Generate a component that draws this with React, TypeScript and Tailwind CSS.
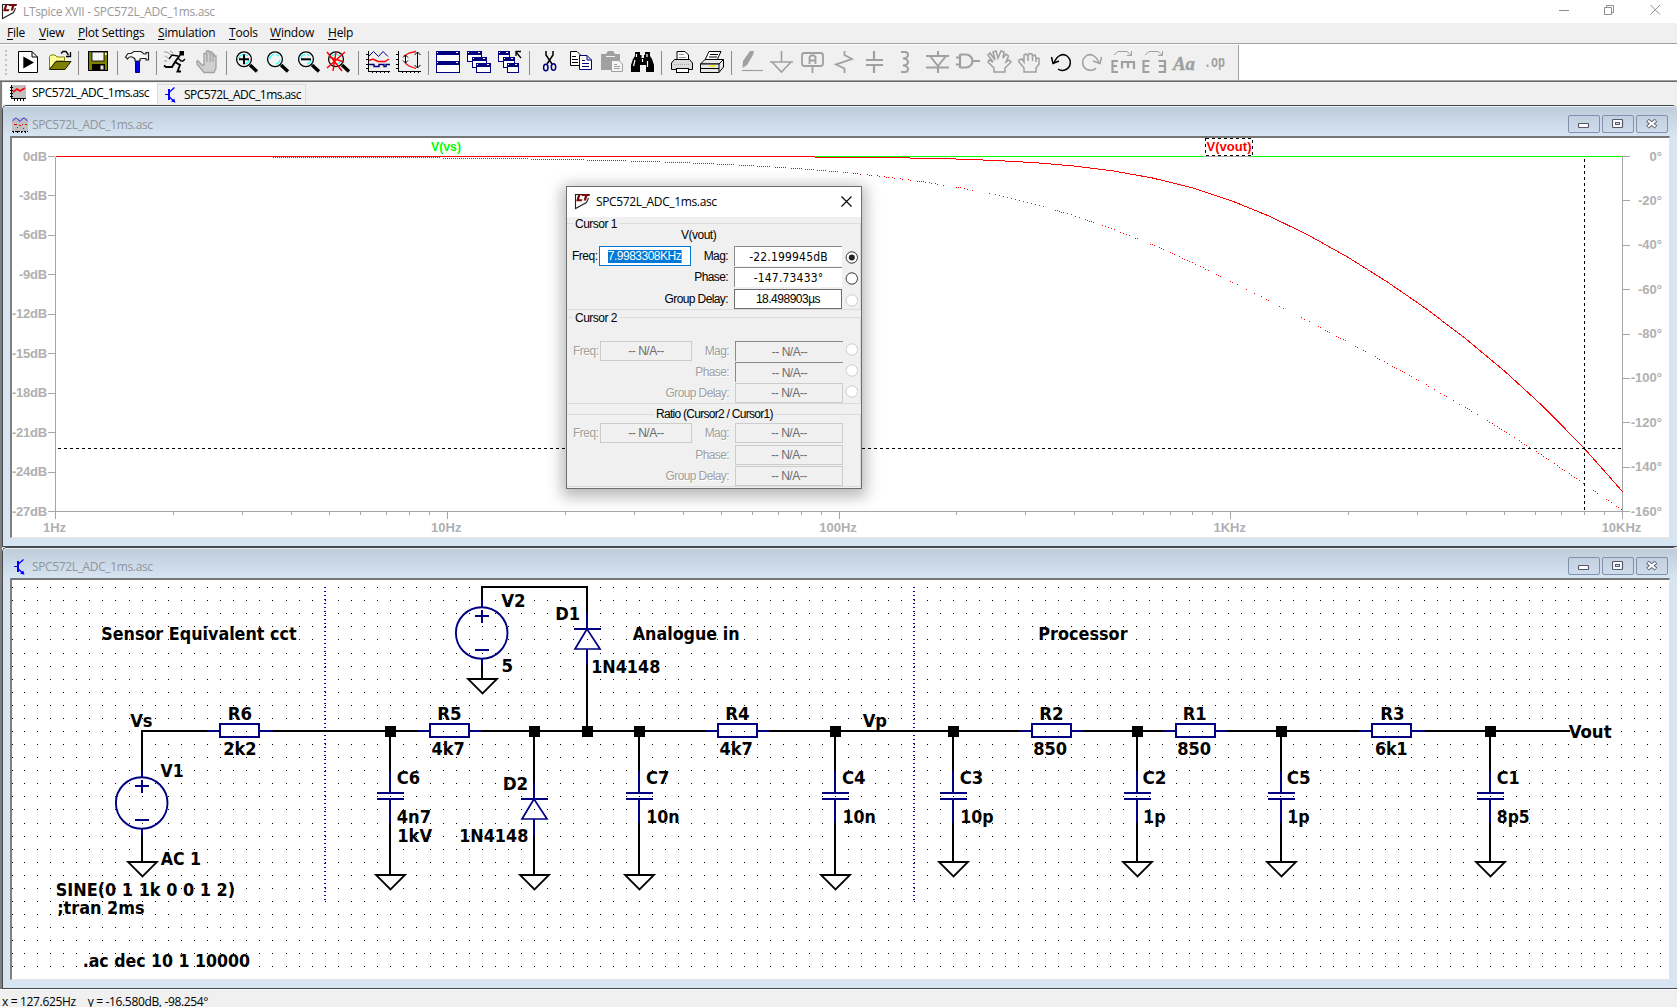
import React from "react";

const UI = "font-['Open_Sans','Noto_Sans',sans-serif]";
const DLG = "font-['Liberation_Sans',Arial,sans-serif]";
const FILE = "SPC572L_ADC_1ms.asc";

/* ---------- small icons ---------- */

function LtLogo({ className = "" }: { className?: string }) {
  return (
    <svg width="17" height="17" viewBox="0 0 17 17" className={className}>
      <path d="M1.5 1.5 V15.5 L12.5 9.5 L14.5 5" fill="#fff" stroke="#222" strokeWidth="1.1" />
      <path d="M1 1.5 H8" stroke="#222" />
      <path d="M4 2 H6.4 L5 6.2 H8.4 L7.8 8.2 H2.2 Z" fill="#7a0a0a" />
      <path d="M8 1 H16 L15.5 3 H13.4 L12 7.4 H9.6 L10.9 3 H7.5 Z" fill="#7a0a0a" />
    </svg>
  );
}

function PlotIcon() {
  return (
    <svg width="16" height="16" viewBox="0 0 16 16" shapeRendering="crispEdges">
      <rect x="1" width="15" height="13" fill="#c0c0c0" />
      <path d="M1.5 0 V13.5 H16 M0 2.5 H3 M0 5.5 H3 M0 8.5 H3 M0 11.5 H3 M4.5 13 V16 M7.5 13 V16 M10.5 13 V16 M13.5 13 V16" stroke="#000" fill="none" />
      <path d="M3 7 L7 4 L10 6 L15 3" stroke="#f00" strokeWidth="1.6" fill="none" shapeRendering="auto" />
    </svg>
  );
}

function WaveIcon() {
  return (
    <svg width="16" height="16" viewBox="0 0 16 16">
      <rect y="1" width="16" height="13" fill="#c0c0c0" />
      <path d="M0.5 4 L3.5 1.2 H4.5 L8 4.5 L11 1.2 H12.5 L15.5 4" stroke="#2020ff" fill="none" />
      <g shapeRendering="crispEdges">
        <path d="M2 7.5 H5 M7 8.5 H9 M10 7.5 H11 M13 7.5 H15 M5 10.5 H6 M11 11.5 H12" stroke="#f00" />
        <path d="M0 14.5 H16 M1.5 14 V16 M5.5 14 V16 M9.5 14 V16 M13.5 14 V16" stroke="#000" strokeDasharray="2 1" />
      </g>
    </svg>
  );
}

function TransistorIcon() {
  return (
    <svg width="16" height="16" viewBox="0 0 16 16">
      <path d="M2 7.5 H6 M11.5 0.5 L6.5 5 M6.5 10 L11 14.5" stroke="#00f" strokeWidth="1.2" fill="none" />
      <path d="M6 2 V13" stroke="#00f" strokeWidth="2" />
      <path d="M12.5 15.8 L8 14.4 L11.2 11.6 Z" fill="#00f" />
    </svg>
  );
}

/* ---------- toolbar ---------- */

const G = "#a0a0a0";

const lens = (cx: number) => (
  <>
    <path d={`M${cx + 6} 15 L${cx + 13} 21.5`} stroke="#000" strokeWidth="3.4" />
    <circle cx={cx} cy="9.3" r="7.4" fill="#f4f4f4" stroke="#000" strokeWidth="1.3" />
    <path d={`M${cx - 5} 9 A5 5 0 0 1 ${cx - 1} 4.3 M${cx + 1} 4.3 L${cx + 4} 6 M${cx + 5} 10 A5 5 0 0 1 ${cx + 1} 14`} stroke="#3ff" strokeWidth="1.3" fill="none" />
  </>
);

const miniWin = (x: number, y: number, w = 15, h = 11) => (
  <>
    <rect x={x + 0.5} y={y + 0.5} width={w - 1} height={h - 1} fill="#fff" stroke="#000080" />
    <rect x={x} y={y} width={w} height="4" fill="#000080" />
    <path d={`M${x + w - 4} ${y + 1.5} h2 M${x + 1} ${y + 1.5} h1`} stroke="#fff" />
  </>
);

const icons: Record<string, React.ReactNode> = {
  play: (
    <>
      <path d="M3.5 1.5 H17 L22.5 7 V22.5 H3.5 Z M17 1.5 V7 H22.5" fill="#fff" stroke="#000" />
      <path d="M8.3 6.5 L19 12.5 L8.3 18.5 Z" fill="#000" />
    </>
  ),
  open: (
    <>
      <path d="M3.5 19 V6.5 L5 5 H9 L11 7 H18.5 V11 H10 Z" fill="#ffff9c" stroke="#808000" />
      <path d="M3.5 19.5 L10 11.5 H25 L19 19.5 Z" fill="#808000" stroke="#222200" />
      <path d="M15 3.5 L17 1.5 H20 L22.5 5 M24.5 2 V6.5 H20" stroke="#000" fill="none" strokeWidth="1.3" />
    </>
  ),
  save: (
    <>
      <rect x="3.5" y="1.5" width="19" height="19" fill="#808000" stroke="#000" />
      <rect x="7" y="2" width="12" height="9" fill="#f4f4f4" stroke="#000" strokeWidth="0.8" />
      <rect x="20" y="3" width="1.5" height="2" fill="#fff" />
      <rect x="7" y="14" width="13" height="7" fill="#000" />
      <rect x="15.5" y="15.5" width="3" height="4" fill="#e0e0e0" />
    </>
  ),
  hammer: (
    <>
      <path d="M1.5 7 L4 3.5 H7 L10 1.5 H17 L20 4 H22 V2.5 H24.5 V10 H22 V8.5 H18 L16 9 V11 H11 V9 C8 6 5 6 3.5 9 Z" fill="#f6f6f6" stroke="#222" strokeWidth="1.2" />
      <path d="M11.5 11.5 H15.5 V22.5 H11.5 Z" fill="#0000e8" stroke="#000080" />
    </>
  ),
  run: (
    <>
      <rect x="16.5" y="1" width="4.5" height="4.5" fill="#000" />
      <path d="M17 5 L12 12 L17 15 L14.5 21.5 H18 M12 12 L9 17 H3 L1 15.5" stroke="#000" strokeWidth="1.9" fill="none" />
      <path d="M15 6 L9 5 L6 9 M15 8 L18 11 H20 L22 9" stroke="#000" strokeWidth="1.4" fill="none" />
      <path d="M1 2 H4 L8 5 M2 6 L5 8 M7 1 L10 3 M1 11 H4" stroke="#999" fill="none" />
    </>
  ),
  hand: (
    <>
      <path d="M8 15 L4 11 H3 V14 L10 22.5 H20 L22 18 V6 H20 V4 H18 V2 H15 V1 H12.5 V3.5 H10 V15 Z" fill="#d0d0d0" stroke={G} strokeWidth="1.3" />
      <path d="M13 4 V12 M16.2 3 V12 M19 5 V12" stroke={G} strokeWidth="1.2" />
    </>
  ),
  zin: (
    <>
      {lens(11)}
      <path d="M6 9.3 H16 M11 4.3 V14.3" stroke="#000" strokeWidth="2" />
    </>
  ),
  zfull: lens(11),
  zout: (
    <>
      {lens(11)}
      <path d="M6 9.3 H16" stroke="#000" strokeWidth="2" />
    </>
  ),
  zx: (
    <>
      {lens(10)}
      <path d="M1 2 L16 21 M19 2 L1 18 M3 7 L18 12 M10 2 L7 21" stroke="#f00" strokeWidth="1.5" />
    </>
  ),
  waves: (
    <>
      <path d="M3.5 1 V21.5 H25 M1 4.5 H4 M1 9.5 H4 M1 14.5 H4 M1 18.5 H4 M7.5 21 V23 M11.5 21 V23 M15.5 21 V23 M19.5 21 V23 M23.5 21 V23" stroke="#000" fill="none" shapeRendering="crispEdges" />
      <path d="M4 6 L8.5 1.5 L13.5 6.5 L18 1.5 L23 6.5" stroke="#000080" fill="none" />
      <path d="M4 10.5 L8 9 L13 11.5 H20 L24 9" stroke="#f00" strokeWidth="1.4" fill="none" />
      <path d="M4 14.5 H9 V16.5 H14 V14.5 H19 V16.5 H21 V14.5 H25" stroke="#000080" fill="none" strokeWidth="1.4" />
    </>
  ),
  vert: (
    <>
      <path d="M2.5 1 V21.5 H25 M0 4.5 H3 M0 9.5 H3 M0 14.5 H3 M0 18.5 H3 M6.5 21 V23 M10.5 21 V23 M14.5 21 V23 M18.5 21 V23 M22.5 21 V23" stroke="#000" fill="none" shapeRendering="crispEdges" />
      <path d="M8 6 L13 3 L20 1.5 M9 13 L13 16 L20 18.5" stroke="#f00" strokeWidth="1.3" fill="none" />
      <path d="M9.5 5 V13 M7 7.5 L9.5 5 L12 7.5 M7 10.5 L9.5 13 L12 10.5 M21.5 2 V18 M18.5 5 L21.5 2 L24.5 5 M18.5 15 L21.5 18 L24.5 15" stroke="#000" fill="none" />
    </>
  ),
  tile: (
    <g shapeRendering="crispEdges">
      {miniWin(1, 1, 24, 11)}
      {miniWin(1, 11, 24, 12)}
    </g>
  ),
  cascade: (
    <g shapeRendering="crispEdges">
      {miniWin(1, 1)}
      {miniWin(6, 7)}
      {miniWin(10, 13, 15, 10)}
    </g>
  ),
  closeall: (
    <g shapeRendering="crispEdges">
      {miniWin(1, 1, 12)}
      {miniWin(6, 7, 12)}
      {miniWin(10, 13, 12, 10)}
      <path d="M19 6 V1.5 H24 M19 2 L24 8" stroke="#000" fill="none" strokeWidth="1.3" shapeRendering="auto" />
    </g>
  ),
  cut: (
    <>
      <path d="M10 1 V5 L16 14 M17 1 V5 L11 14" stroke="#000" strokeWidth="1.5" fill="none" />
      <ellipse cx="9.8" cy="17.5" rx="2.2" ry="3.3" fill="none" stroke="#000080" strokeWidth="1.5" />
      <ellipse cx="17.5" cy="17" rx="2.2" ry="3.3" fill="none" stroke="#000080" strokeWidth="1.5" />
    </>
  ),
  copy: (
    <>
      <path d="M3.5 1.5 H10 L14.5 6 V15.5 H3.5 Z" fill="#fff" stroke="#000" />
      <path d="M5 6.5 H9 M5 9.5 H11 M5 12.5 H11" stroke="#000" />
      <path d="M12.5 5.5 H20 L24.5 10 V19.5 H12.5 Z M20 5.5 V10 H24.5" fill="#fff" stroke="#000080" />
      <path d="M15 10.5 H18 M15 13.5 H22 M15 16.5 H22" stroke="#000080" />
    </>
  ),
  paste: (
    <>
      <path d="M3 4 H8 L10 1 H15 L17 4 H22 V20 H3 Z" fill={G} />
      <path d="M8 6.5 H17" stroke="#f0f0f0" />
      <path d="M13.5 10.5 H21 L24.5 14 V21.5 H13.5 Z" fill="#f4f4f4" stroke={G} />
      <path d="M16 14.5 H19 M16 16.5 H22 M16 18.5 H22" stroke={G} />
    </>
  ),
  find: (
    <>
      <path d="M6 2 H11 V5 H12.5 V8 H15 V5 H16 V2 H21 V6 L23 9 L25 15 V22 H17 V15 H11 V22 H2 V15 L4 9 L6 6 Z" fill="#000" />
      <path d="M7.5 4 V7 M18 4 V7 M6 10 L4.5 16 M18.5 11 V17 M13.5 9 V12" stroke="#fff" strokeWidth="1.2" />
    </>
  ),
  print: (
    <>
      <path d="M9 10 V1.5 H17 L20.5 5 V10" fill="#fff" stroke="#000" />
      <path d="M11 4.5 H16 M11 7.5 H18" stroke="#999" />
      <path d="M3.5 13 L6.5 9.5 H21.5 L24.5 13 V19.5 H3.5 Z" fill="#dcdcdc" stroke="#000" />
      <rect x="8.5" y="18.5" width="12" height="4" fill="#fff" stroke="#000" />
      <path d="M6 14.5 H22" stroke="#aaa" strokeDasharray="1 1" />
    </>
  ),
  print2: (
    <>
      <path d="M6 10 L10 1.5 H22 L18 10" fill="#fff" stroke="#000" />
      <path d="M11 4.5 H19 M10 7 H18" stroke="#000" />
      <path d="M1.5 14 L6 9.5 H24.5 L20 14 Z" fill="#e8e8e8" stroke="#000" />
      <path d="M1.5 14 H20 V22.5 H1.5 Z M20 14 L24.5 9.5 V17 L20 22.5 M1.5 18.5 H20" fill="#e8e8e8" stroke="#000" />
      <path d="M11 16 H16" stroke="#f2e600" strokeWidth="1.6" />
    </>
  ),
  pencil: (
    <>
      <path d="M12 1 H16 L15 5 L9 15 L4.5 18 L5 11 Z" fill={G} />
      <path d="M4 20.5 H25" stroke={G} strokeWidth="1.2" />
    </>
  ),
  gnd: <path d="M12.5 1 V12 M1 12 H24 M3 12 L12.5 22 L22 12" stroke={G} strokeWidth="1.6" fill="none" />,
  label: (
    <>
      <rect x="2" y="3" width="21" height="13" rx="2.5" fill="none" stroke={G} strokeWidth="1.8" />
      <path d="M12.5 16 V23 M9.5 14 V7 L11 5.5 H14 L15.5 7 V14 M9.5 10.5 H15.5" stroke={G} strokeWidth="1.8" fill="none" />
    </>
  ),
  res: <path d="M13.5 1 V5 L21 9 L5 14.5 L13.5 18.5 V23" stroke={G} strokeWidth="1.8" fill="none" />,
  cap: <path d="M12 1 V9 M4 10 H21 M4 15 H21 M12 16 V23" stroke={G} strokeWidth="2.2" fill="none" />,
  ind: <path d="M8 2 H12 Q15 2 15 5 Q15 8 10 8.5 Q15 9 15 12 Q15 15 10 15.5 Q15 16 15 19 Q15 22 12 22 H8" stroke={G} strokeWidth="2" fill="none" />,
  diode: <path d="M14 1 V6 M2 6 H25 M6 6 L14 16 L22 6 M2 17.5 H25 M14 17 V23" stroke={G} strokeWidth="2" fill="none" />,
  gate: <path d="M5 4 V18 M5 4.5 H11 A6.5 6.5 0 0 1 11 17.5 H5 M1 7.5 H5 M1 14.5 H5 M18 11 H25" stroke={G} strokeWidth="2.2" fill="none" />,
  move: <path d="M8 22 L8 18 L2 12 L3 10 L7 12 L2 5 L4 3 L9 10 L7 2 L10 1 L12 8 L15 1 L18 2 L17 8 L20 4 L22.5 6 L20 12 L23 10 L25 12 L19 18 V22 Z" fill="none" stroke={G} strokeWidth="1.5" />,
  drag: <path d="M7 22 V18 L2 12 V10 L5 9 L7 12 V5 L9 4 L11 6 L12 3.5 L15 4 L15.5 6 L18 5 L19 8 L22 8.5 V14 L19 18 V22 Z M11 6 V11 M15.5 6 V11 M19 8 V12" fill="none" stroke={G} strokeWidth="1.5" />,
  undo: <path d="M6 13 C9 5 15 3 19 6 C24 10 23 17 18 19.5 C15 21 12 20.5 10 19 M3.5 7 L5 13.5 L11 11" stroke="#000" strokeWidth="1.5" fill="none" />,
  redo: <path d="M20 13 C17 5 11 3 7 6 C2 10 3 17 8 19.5 C11 21 15 20.5 17 18 M22.5 7 L21 13.5 L14 11" stroke={G} strokeWidth="1.5" fill="none" />,
  rot: (
    <>
      <path d="M4 5 L8 1.5 H17 L21 5 M21.5 1 V5.5 H17" stroke={G} fill="none" />
      <path d="M8 11 H2.5 V22 H8 M2.5 16 H7 M12 18.5 V12 H25 M18 12 V18 M24 12 V19" stroke={G} strokeWidth="2.2" fill="none" />
    </>
  ),
  mirror: (
    <>
      <path d="M4 5 L8 1.5 H17 L21 5 M21.5 1 V5.5 H17" stroke={G} fill="none" />
      <path d="M8.5 11 H2.5 V22 H8.5 M2.5 16 H8 M17.5 11 H24 V22 H17.5 M24 16 H18" stroke={G} strokeWidth="2.2" fill="none" />
    </>
  ),
  text: (
    <text x="1" y="19.5" fontSize="19" fontWeight="bold" fontStyle="italic" fill={G} stroke={G} strokeWidth="0.4" textLength="22" lengthAdjust="spacingAndGlyphs" fontFamily="Liberation Serif, serif">
      Aa
    </text>
  ),
  op: (
    <text x="1" y="17" fontSize="17" fontWeight="bold" fill={G} textLength="21" lengthAdjust="spacingAndGlyphs" fontFamily="Liberation Mono, monospace">
      .op
    </text>
  ),
};

const toolbar =
  "play open | save | hammer | run hand | zin zfull zout zx | waves vert | tile cascade closeall | cut copy paste find | print print2 | pencil gnd label res cap ind diode gate move drag undo redo rot mirror text op".split(" ");

function Toolbar() {
  return (
    <div className="flex h-[35px] bg-white">
      <div className="flex w-[1239px] items-center border-r border-[#a0a0a0] bg-[#f0f0f0]">
        <div className="ml-[5px] mr-[5px] flex h-[26px] w-[2px] flex-col justify-between">
          {[0, 1, 2, 3, 4, 5].map((i) => (
            <i key={i} className="h-[2px] w-[2px] bg-[#c0c0c0]" />
          ))}
        </div>
        {toolbar.map((n, i) =>
          n === "|" ? (
            <div key={i} className="flex w-2 justify-center">
              <div className="h-6 w-px bg-[#8c8c8c]" />
            </div>
          ) : (
            <div key={i} className="flex w-[31px] shrink-0 justify-center">
              <svg width="25" height="25" viewBox="0 0 25 25" className="overflow-visible">
                {icons[n]}
              </svg>
            </div>
          )
        )}
      </div>
    </div>
  );
}

/* ---------- child windows ---------- */

function WinButtons() {
  const box = "flex h-[18px] w-8 items-center justify-center rounded-[2px] border border-[#8190ae] bg-gradient-to-b from-[#c3d0df] to-[#cddbea]";
  return (
    <div className="mr-[9px] flex gap-[2px]">
      <div className={box}>
        <svg width="12" height="12" viewBox="0 0 12 12">
          <rect x="0.5" y="5.5" width="10" height="4" rx="0.8" fill="#fff" stroke="#55576a" strokeWidth="1.2" />
        </svg>
      </div>
      <div className={box}>
        <svg width="12" height="12" viewBox="0 0 12 12">
          <rect x="0.5" y="1.5" width="10" height="8" rx="0.8" fill="#fff" stroke="#55576a" strokeWidth="1.2" />
          <rect x="3.5" y="4.5" width="4" height="2" fill="#cfdcea" stroke="#55576a" />
        </svg>
      </div>
      <div className={box}>
        <svg width="12" height="12" viewBox="0 0 12 12">
          <path d="M1.5 2.2 L10 9 M10 2.2 L1.5 9" stroke="#55576a" strokeWidth="4" />
          <path d="M2 2.6 L9.5 8.6 M9.5 2.6 L2 8.6" stroke="#fff" strokeWidth="2" />
        </svg>
      </div>
    </div>
  );
}

function ChildWindow({ icon, className, children }: { icon: React.ReactNode; className: string; children: React.ReactNode }) {
  return (
    <section className={`flex flex-col rounded-t-[5px] border-l border-t border-[#45484c] bg-[#d7e4f2] ${className}`}>
      <header className="flex h-[30px] shrink-0 items-center rounded-t-[4px] border-t border-[#e4ecf4] bg-gradient-to-b from-[#bfccda] to-[#d7e4f2]">
        <span className="ml-[9px] mt-[6px]">{icon}</span>
        <span className={`${UI} ml-[4px] mt-[6px] flex-1 text-[12px] leading-4 tracking-[-0.36px] text-[#8f959d]`}>{FILE}</span>
        <div className="mt-[5px]">
          <WinButtons />
        </div>
      </header>
      <div className="ml-[7px] mr-[7px] border-b border-l-2 border-r border-t-2 border-b-[#e3e3e3] border-l-[#808080] border-r-[#e3e3e3] border-t-[#757575] bg-white">
        {children}
      </div>
    </section>
  );
}

/* ---------- bode plot ---------- */

type C = [number, number];
const mul = (a: C, b: C): C => [a[0] * b[0] - a[1] * b[1], a[0] * b[1] + a[1] * b[0]];

/* RC ladder from source to output: [series ohms, shunt farads] */
const ladder: C[] = [
  [2200, 4.7e-9],
  [4700, 10e-9],
  [4700, 10.01e-9],
  [850, 1e-12],
  [850, 1e-12],
  [6100, 8.5e-12],
];

function response(f: number) {
  let v: C = [1, 0];
  let i: C = [0, 0];
  for (const [r, c] of [...ladder].reverse()) {
    const y = mul(v, [0, 2 * Math.PI * f * c]);
    i = [i[0] + y[0], i[1] + y[1]];
    v = [v[0] + i[0] * r, v[1] + i[1] * r];
  }
  let ph = Math.atan2(v[1], v[0]);
  if (ph < 0) ph += 2 * Math.PI;
  return { db: -20 * Math.log10(Math.hypot(v[0], v[1])), deg: (-ph * 180) / Math.PI };
}

const X0 = 55.5;
const X1 = 1622.5;
const Y0 = 156.5;
const H = 355;
const samples = Array.from({ length: 41 }, (_, k) => {
  const r = response(Math.pow(10, k / 10));
  return { x: X0 + ((X1 - X0) * k) / 40, m: Y0 - (r.db * H) / 27, p: Y0 - (r.deg * H) / 160 };
});
const magPath = "M" + samples.map((s) => `${s.x.toFixed(2)} ${s.m.toFixed(2)}`).join(" L");

function phaseAt(x: number) {
  const t = ((x - X0) / (X1 - X0)) * 40;
  const k = Math.min(39, Math.max(0, Math.floor(t)));
  return samples[k].p + (samples[k + 1].p - samples[k].p) * (t - k);
}

/* visible runs of the sparse phase trace: [start, end, pitch] */
const runs: number[][] = [
  [860, 862, 2], [867, 872, 2], [877, 881, 2], [884, 889, 2], [892, 896, 2], [900, 903, 2], [908, 911, 2],
  [917, 926, 2], [929, 932, 2], [935, 938, 2], [943, 944, 2], [956, 962, 2], [964, 969, 3], [972, 973, 2],
  [989, 990, 2], [995, 997, 2], [999, 1000, 2], [1003, 1044, 4], [1055, 1062, 2], [1063, 1082, 4],
  [1085, 1094, 2], [1102, 1117, 3], [1120, 1130, 3], [1135, 1139, 2], [1150, 1155, 2], [1159, 1164, 2],
  [1170, 1175, 2], [1179, 1195, 2.6], [1200, 1210, 2.6], [1216, 1222, 2], [1230, 1234, 2], [1237, 1238, 2],
  [1246, 1247, 2], [1254, 1255, 2], [1261, 1262, 2], [1266, 1270, 2],
  [1279, 1280, 2], [1283, 1284, 2], [1301, 1304, 2.5], [1309, 1310, 3], [1318, 1321, 2], [1325, 1330, 2],
  [1336, 1342, 2], [1343, 1347, 2], [1355, 1358, 2], [1363, 1366, 2], [1375, 1380, 2], [1384, 1388, 3],
  [1392, 1397, 2], [1400, 1405, 2], [1409, 1412, 2], [1416, 1420, 2], [1426, 1429, 2], [1434, 1436, 2],
  [1440, 1441, 2], [1444, 1448, 2], [1453, 1455, 3], [1459, 1460, 2], [1465, 1472, 2], [1477, 1478, 2],
  [1487, 1510, 2.4], [1514, 1515, 2], [1519, 1530, 2.4], [1536, 1550, 2.4], [1554, 1565, 2.6],
  [1569, 1580, 2.4], [1583, 1584, 2], [1593, 1599, 2], [1606, 1612, 2.4], [1616, 1622, 2.4],
];

const dots: string[] = [];
for (let x = 273; x < 860; x += 2) {
  const y = Math.floor(phaseAt(x));
  if (y > 156 && y === Math.floor(phaseAt(x - 3))) dots.push(`M${x} ${y + 0.5}h1`);
}
runs.forEach(([a, b, p]) => {
  for (let x = a; x < b; x += p) dots.push(`M${Math.round(x)} ${Math.floor(phaseAt(x)) + 0.5}h1`);
});

const freqTicks: { x: number; major: boolean }[] = [];
for (let d = 0; d < 4; d++)
  for (let n = 1; n < 10; n++)
    freqTicks.push({ x: Math.floor(X0 + ((X1 - X0) / 4) * (d + Math.log10(n))) + 0.5, major: n === 1 });
freqTicks.push({ x: X1, major: true });

function Plot() {
  return (
    <svg width="1656" height="399" viewBox="12 138 1656 399" className="block" fontFamily="Liberation Sans, Arial, sans-serif" fontWeight="bold" fontSize="13">
      <g stroke="#a6a6a6" shapeRendering="crispEdges" fill="none">
        <path d={`M${X0} ${Y0} V519 M${X1} ${Y0} V519 M${X0} ${Y0} H${X1} M${X0} 511.5 H${X1}`} />
        {freqTicks.map((t, i) => (
          <path key={i} d={`M${t.x} 511.5 V${t.major ? 519 : 515}`} />
        ))}
        {Array.from({ length: 10 }, (_, i) => (
          <path key={i} d={`M48 ${Math.floor(Y0 + (i * H) / 9) + 0.5} H55`} />
        ))}
        {Array.from({ length: 9 }, (_, i) => (
          <path key={i} d={`M1623 ${Math.floor(Y0 + (i * H) / 8) + 0.5} H1630`} />
        ))}
      </g>
      <g fill="#b0b0b0">
        {Array.from({ length: 10 }, (_, i) => (
          <text key={i} x="47" y={160.6 + Math.floor((i * H) / 9)} textAnchor="end" letterSpacing="-0.2">
            {i ? `-${i * 3}dB` : "0dB"}
          </text>
        ))}
        {Array.from({ length: 9 }, (_, i) => (
          <text key={i} x="1662" y={160.6 + Math.floor((i * H) / 8)} textAnchor="end">
            {i ? `-${i * 20}°` : "0°"}
          </text>
        ))}
        {["1Hz", "10Hz", "100Hz", "1KHz", "10KHz"].map((t, i) => (
          <text key={t} x={54.5 + i * 391.75} y="532" textAnchor="middle">
            {t}
          </text>
        ))}
      </g>
      <g shapeRendering="crispEdges" fill="none">
        <path d={`M56 ${Y0} H1204 M1252 ${Y0} H1622`} stroke="#00ff00" />
        <path d={magPath} stroke="#ff0000" />
        <path d={dots.join("")} stroke="#ff0000" />
        <path d="M58 448.5 H1622" stroke="#000" strokeDasharray="3 3" />
        <path d="M1584.5 159 V511" stroke="#000" strokeDasharray="3 3" />
        <rect x="1205.5" y="138.5" width="47" height="17" stroke="#000" strokeDasharray="3 3" />
      </g>
      <text x="431" y="151" fill="#00ff00" textLength="30" lengthAdjust="spacingAndGlyphs">V(vs)</text>
      <text x="1206.5" y="151" fill="#ff0000" textLength="45" lengthAdjust="spacingAndGlyphs">V(vout)</text>
    </svg>
  );
}

/* ---------- schematic ---------- */

const NAVY = "#000080";
const gx = (c: number) => Math.floor(24.34 + 13.0905 * c);
const gy = (r: number) => Math.round(587 + 13.08 * r);

function Wire({ c1, r1, c2, r2 }: { c1: number; r1: number; c2: number; r2: number }) {
  return <path d={`M${gx(c1)} ${gy(r1)} L${gx(c2)} ${gy(r2)}`} stroke="#000" strokeWidth="2" strokeLinecap="square" shapeRendering="crispEdges" />;
}
function Ground({ c, r }: { c: number; r: number }) {
  const x = gx(c);
  const y = gy(r);
  return <path d={`M${x - 14} ${y} H${x + 15} L${x + 0.5} ${y + 14.5} Z`} fill="#fff" stroke="#000" strokeWidth="1.8" />;
}
function Resistor({ c }: { c: number }) {
  const a = gx(c);
  const b = gx(c + 5);
  return (
    <g stroke={NAVY} strokeWidth="2" fill="none" shapeRendering="crispEdges">
      <path d={`M${a} 731 H${a + 13} M${a + 52} 731 H${b}`} />
      <rect x={a + 13} y="724" width="39" height="13" />
    </g>
  );
}
function Capacitor({ c, g }: { c: number; g: number }) {
  const x = gx(c);
  return (
    <g fill="none">
      <Wire c1={c} r1={11} c2={c} r2={14} />
      <Wire c1={c} r1={18} c2={c} r2={g} />
      <path d={`M${x} 771 V793 M${x} 799 V823 M${x - 13} 793 H${x + 14} M${x - 13} 799 H${x + 14}`} stroke={NAVY} strokeWidth="2" shapeRendering="crispEdges" />
      <Ground c={c} r={g} />
    </g>
  );
}
function Diode({ c, r }: { c: number; r: number }) {
  const x = gx(c);
  const y = gy(r);
  return (
    <g fill="none" stroke={NAVY} strokeWidth="2">
      <path d={`M${x} ${y} V${y + 16} M${x - 13} ${y + 16} H${x + 14} M${x} ${y + 36} V${gy(r + 4)}`} shapeRendering="crispEdges" />
      <path d={`M${x} ${y + 16} L${x - 12} ${y + 36} H${x + 13} Z`} strokeWidth="1.7" />
    </g>
  );
}
function Source({ c, r }: { c: number; r: number }) {
  const x = gx(c);
  const y = gy(r + 2.5);
  return (
    <g fill="none" stroke={NAVY} strokeWidth="1.9">
      <circle cx={x - 0.3} cy={y} r="25.8" />
      <path d={`M${x} ${gy(r)} V${y - 25} M${x} ${y + 25} V${gy(r + 5)} M${x - 7} ${y - 17} h14 M${x} ${y - 23} v13 M${x - 7} ${y + 17} h14`} strokeWidth="2" shapeRendering="crispEdges" />
    </g>
  );
}

/* [text, left, right, baseline] */
const labels: [string, number, number, number][] = [
  ["Sensor Equivalent cct", 102, 296, 640],
  ["Analogue in", 633.5, 739, 640],
  ["Processor", 1039, 1127, 640],
  ["Vs", 131, 152, 727], ["Vp", 863.5, 886.5, 727], ["Vout", 1569.5, 1611, 738],
  ["R6", 228.5, 251.5, 720], ["2k2", 224, 256, 755],
  ["R5", 438, 461, 720], ["4k7", 432.3, 464, 755],
  ["R4", 726, 749, 720], ["4k7", 720.3, 752.3, 755],
  ["R2", 1040, 1063, 720], ["850", 1034, 1066.5, 755],
  ["R1", 1183.5, 1206, 720], ["850", 1178, 1210.5, 755],
  ["R3", 1381, 1404, 720], ["6k1", 1375.7, 1407, 755],
  ["V1", 161.3, 183, 777], ["AC 1", 161.5, 200.5, 865],
  ["V2", 502, 525, 607], ["5", 502.3, 512.5, 672],
  ["D1", 556, 579.5, 620], ["1N4148", 592, 659.7, 673],
  ["D2", 503.5, 527.7, 790], ["1N4148", 460, 527.7, 842],
  ["C6", 397.5, 419.5, 784], ["4n7", 397.5, 430.5, 823], ["1kV", 398, 431.5, 842],
  ["C7", 646.7, 668.7, 784], ["10n", 647, 679, 823],
  ["C4", 842.7, 865, 784], ["10n", 843.3, 875.3, 823],
  ["C3", 960.5, 982.8, 784], ["10p", 961, 993, 823],
  ["C2", 1143.3, 1166, 784], ["1p", 1143.8, 1165, 823],
  ["C5", 1287.5, 1310, 784], ["1p", 1288, 1309, 823],
  ["C1", 1497.5, 1519, 784], ["8p5", 1497.6, 1529, 823],
  ["SINE(0 1 1k 0 0 1 2)", 56.5, 234.5, 896],
  [";tran 2ms", 58, 144, 914],
  [".ac dec 10 1 10000", 83.5, 249.5, 967],
];

const gridDots: string[] = [];
for (let r = 0; r < 30; r++)
  for (let c = -1; c <= 125; c++) gridDots.push(`M${Math.max(12, Math.floor(24.3 + 13.088 * c))} ${Math.round(587.1 + 13.08 * r) + 0.5}h1`);

const rail: [number, number][] = [[9, 14], [19, 30], [35, 52], [57, 76], [81, 87], [92, 102], [107, 118]];

function Schematic() {
  return (
    <svg width="1656" height="399" viewBox="12 580 1656 399" className="block">
      <path d={gridDots.join("")} stroke="#000" shapeRendering="crispEdges" />
      <path d="M325 587 V902 M914 587 V902" stroke="#0000b4" strokeWidth="2" strokeDasharray="1 3" shapeRendering="crispEdges" />
      {rail.map(([a, b]) => (
        <Wire key={a} c1={a} r1={11} c2={b} r2={11} />
      ))}
      <Wire c1={9} r1={11} c2={9} r2={14} />
      <Wire c1={9} r1={19} c2={9} r2={21} />
      <Source c={9} r={14} />
      <Ground c={9} r={21} />
      <Wire c1={35} r1={0} c2={43} r2={0} />
      <Wire c1={35} r1={0} c2={35} r2={1} />
      <Wire c1={43} r1={0} c2={43} r2={2} />
      <Wire c1={35} r1={6} c2={35} r2={7} />
      <Source c={35} r={1} />
      <Ground c={35} r={7} />
      <Wire c1={43} r1={6} c2={43} r2={11} />
      <Diode c={43} r={2} />
      <Wire c1={39} r1={11} c2={39} r2={15} />
      <Wire c1={39} r1={19} c2={39} r2={22} />
      <Diode c={39} r={15} />
      <Ground c={39} r={22} />
      {[14, 30, 52, 76, 87, 102].map((c) => (
        <Resistor key={c} c={c} />
      ))}
      {[28, 47, 62].map((c) => (
        <Capacitor key={c} c={c} g={22} />
      ))}
      {[71, 85, 96, 112].map((c) => (
        <Capacitor key={c} c={c} g={21} />
      ))}
      {[28, 39, 43, 47, 62, 71, 85, 96, 112].map((c) => (
        <rect key={c} x={gx(c) - 5} y="726" width="11" height="11" fill="#000" />
      ))}
      <g fontFamily="DejaVu Sans Condensed, DejaVu Sans, sans-serif" fontWeight="bold" fontSize="17" fill="#000">
        {labels.map(([t, a, b, y], i) => (
          <text key={i} x={a - 0.8} y={y - 0.3} textLength={b - a + 1.4} lengthAdjust="spacingAndGlyphs">
            {t}
          </text>
        ))}
      </g>
    </svg>
  );
}

/* ---------- cursor dialog ---------- */

type RowProps = { label: string; value: string; freq?: string; live?: boolean; radio?: "on" | "off" | "dim"; style?: "sunken" | "box"; big?: boolean };

function Row({ label, value, freq, live, radio, style = "box", big }: RowProps) {
  const lab = live ? "text-black" : "text-[#a0a0a0] [text-shadow:1px_1px_0_#fff]";
  const box =
    style === "sunken"
      ? "border-l border-t border-[#8a8a8a]"
      : live
      ? "border border-[#6e6e6e]"
      : "border border-[#cccccc]";
  return (
    <div className={`flex h-5 shrink-0 items-center ${live ? "" : "pl-px"}`}>
      <span className={`w-8 pl-[5px] ${lab}`}>{freq ? "Freq:" : ""}</span>
      {freq ? (
        live ? (
          <div className="flex h-5 w-[92px] items-center justify-center border border-[#0078d7] bg-white">
            <span className="border-r border-[#ff8728] bg-[#0078d7] leading-[13px] text-white">{freq}</span>
          </div>
        ) : (
          <div className="flex h-5 w-[92px] items-center justify-center border border-[#cccccc] text-[#6d6d6d]">{freq}</div>
        )
      ) : (
        <div className="w-[92px]" />
      )}
      <span className={`mr-[6px] flex w-[37px] justify-end whitespace-nowrap tracking-[-0.6px] ${lab}`}>{label}</span>
      <div
        className={`flex h-5 w-[108px] items-center justify-center ${box} ${live ? "bg-white text-black" : "text-[#6d6d6d]"} ${
          big ? "font-['DejaVu_Sans_Condensed','DejaVu_Sans',sans-serif] text-[12px] tracking-[0.18px]" : ""
        }`}
      >
        {value}
      </div>
      {radio && (
        <svg width="13" height="13" viewBox="0 0 13 13" className={live ? "ml-[3px] mt-[2px]" : "-mt-[4px] ml-[2px]"}>
          <circle cx="6.8" cy="6.5" r="5.7" fill="#fff" stroke={radio === "dim" ? "#cccccc" : "#333"} />
          {radio === "on" && <circle cx="6.8" cy="6.5" r="3" fill="#222" />}
        </svg>
      )}
    </div>
  );
}

function Group({ title, center, className, children }: { title: string; center?: boolean; className: string; children: React.ReactNode }) {
  return (
    <div className={`relative border-y border-r border-[#dcdcdc] ${className}`}>
      <span className={`absolute whitespace-nowrap bg-[#f0f0f0] px-[2px] leading-[14px] text-black ${center ? "-top-[8px] left-[87px] tracking-[-0.72px]" : "-top-[7px] left-[6px]"}`}>{title}</span>
      {children}
    </div>
  );
}

function CursorDialog() {
  return (
    <div className={`absolute left-[566px] top-[186px] h-[303px] w-[296px] border border-[#6e6e6e] bg-[#f0f0f0] shadow-[0_4px_14px_4px_rgba(0,0,0,0.28)] ${DLG} text-[12px] leading-[14px] tracking-[-0.5px]`}>
      <div className="flex h-[30px] items-center bg-white">
        <LtLogo className="mb-[2px] ml-[7px] mr-[5px]" />
        <span className={`${UI} flex-1 text-[12px] tracking-[-0.36px] text-black`}>{FILE}</span>
        <svg width="11" height="11" viewBox="0 0 11 11" className="mb-[2px] mr-[9px]">
          <path d="M0.5 0.5 L10.5 10.5 M10.5 0.5 L0.5 10.5" stroke="#000" strokeWidth="1.1" />
        </svg>
      </div>
      <Group title="Cursor 1" className="mt-[6px] h-[87px]">
        <div className="flex h-[22px] items-center pl-[114px] text-black">V(vout)</div>
        <Row live label="Mag:" freq="7.9983308KHz" value="-22.199945dB" radio="on" style="sunken" big />
        <div className="h-px" />
        <Row live label="Phase:" value="-147.73433°" radio="off" style="sunken" big />
        <div className="h-[2px]" />
        <Row live label="Group Delay:" value="18.498903µs" radio="dim" />
      </Group>
      <Group title="Cursor 2" className="mt-[7px] flex h-[87px] flex-col gap-px pt-[23px]">
        <Row label="Mag:" freq="-- N/A--" value="-- N/A--" radio="dim" style="sunken" />
        <Row label="Phase:" value="-- N/A--" radio="dim" style="sunken" />
        <Row label="Group Delay:" value="-- N/A--" radio="dim" />
      </Group>
      <Group title="Ratio (Cursor2 / Cursor1)" center className="mt-[10px] flex h-[73px] flex-col pt-[8px]">
        <Row label="Mag:" freq="-- N/A--" value="-- N/A--" />
        <div className="h-[2px]" />
        <Row label="Phase:" value="-- N/A--" />
        <div className="h-px" />
        <Row label="Group Delay:" value="-- N/A--" />
      </Group>
    </div>
  );
}

/* ---------- shell ---------- */

function TitleBar() {
  return (
    <div className="flex h-[23px] items-center bg-white">
      <LtLogo className="ml-[1px] mr-[5px]" />
      <span className={`${UI} flex-1 text-[12px] tracking-[-0.33px] text-[#999]`}>LTspice XVII - {FILE}</span>
      <svg width="102" height="12" viewBox="0 0 102 12" className="mb-[3px] mr-[16px]" fill="none" stroke="#8f8f8f">
        <path d="M0 6.5 H10" />
        <path d="M45.5 3.5 H52.5 V10.5 H45.5 Z M47.5 3.5 V1.5 H54.5 V8.5 H52.5" />
        <path d="M91.5 1 L101 10.5 M101 1 L91.5 10.5" />
      </svg>
    </div>
  );
}

const menu: [string, string][] = [
  ["File", "w-[32px]"],
  ["View", "w-[39px]"],
  ["Plot Settings", "w-[80px]"],
  ["Simulation", "w-[71px]"],
  ["Tools", "w-[41px]"],
  ["Window", "w-[58px]"],
  ["Help", "w-[40px]"],
];

function MenuBar() {
  return (
    <div className={`${UI} flex h-[20px] items-center bg-[#f0f0f0] pl-[7px] text-[12px] leading-4 tracking-[-0.22px] text-black`}>
      {menu.map(([m, w]) => (
        <span key={m} className={`${w} shrink-0 whitespace-nowrap`}>
          <span className="underline underline-offset-2">{m[0]}</span>
          {m.slice(1)}
        </span>
      ))}
    </div>
  );
}

function Tabs() {
  const label = "font-['Open_Sans','Noto_Sans',sans-serif] text-[12px] leading-4 tracking-[-0.56px] text-black";
  return (
    <div className="flex h-[23px] items-start bg-[#f0f0f0] pl-px pt-px">
      <div className="flex h-[21px] w-[155px] items-center border-r border-[#dcdcdc] bg-white pb-[2px] pl-[7px]">
        <PlotIcon />
        <span className={`${label} ml-[6px]`}>{FILE}</span>
      </div>
      <div className="mt-px flex h-[20px] w-[148px] items-center border-r border-t border-[#d9d9d9] bg-[#f2f2f2] pl-[5px]">
        <TransistorIcon />
        <span className={`${label} ml-[5px]`}>{FILE}</span>
      </div>
    </div>
  );
}

export default function App() {
  return (
    <div className="relative flex h-[1007px] w-[1677px] flex-col overflow-hidden bg-[#f0f0f0]">
      <TitleBar />
      <MenuBar />
      <div className="h-[2px] border-b border-t border-b-white border-t-[#a0a0a0]" />
      <Toolbar />
      <div className="h-[2px] shrink-0 border-b border-t border-b-[#696969] border-t-[#a0a0a0]" />
      <div className="flex h-[907px] flex-col border-l-2 border-[#808080]">
        <Tabs />
        <ChildWindow icon={<WaveIcon />} className="h-[441px] shrink-0">
          <Plot />
        </ChildWindow>
        <div className="h-px shrink-0 bg-[#45484c]" />
        <ChildWindow icon={<TransistorIcon />} className="h-[441px] shrink-0">
          <Schematic />
        </ChildWindow>
        <div className="h-px shrink-0 bg-[#45484c]" />
      </div>
      <div className={`${UI} flex h-[18px] shrink-0 items-end gap-[12px] border-t border-[#fafafa] bg-[#f0f0f0] pl-[2px] text-[12px] leading-[11px] tracking-[-0.34px] text-black`}>
        <span>x = 127.625Hz</span>
        <span>y = -16.580dB, -98.254°</span>
      </div>
      <CursorDialog />
    </div>
  );
}
